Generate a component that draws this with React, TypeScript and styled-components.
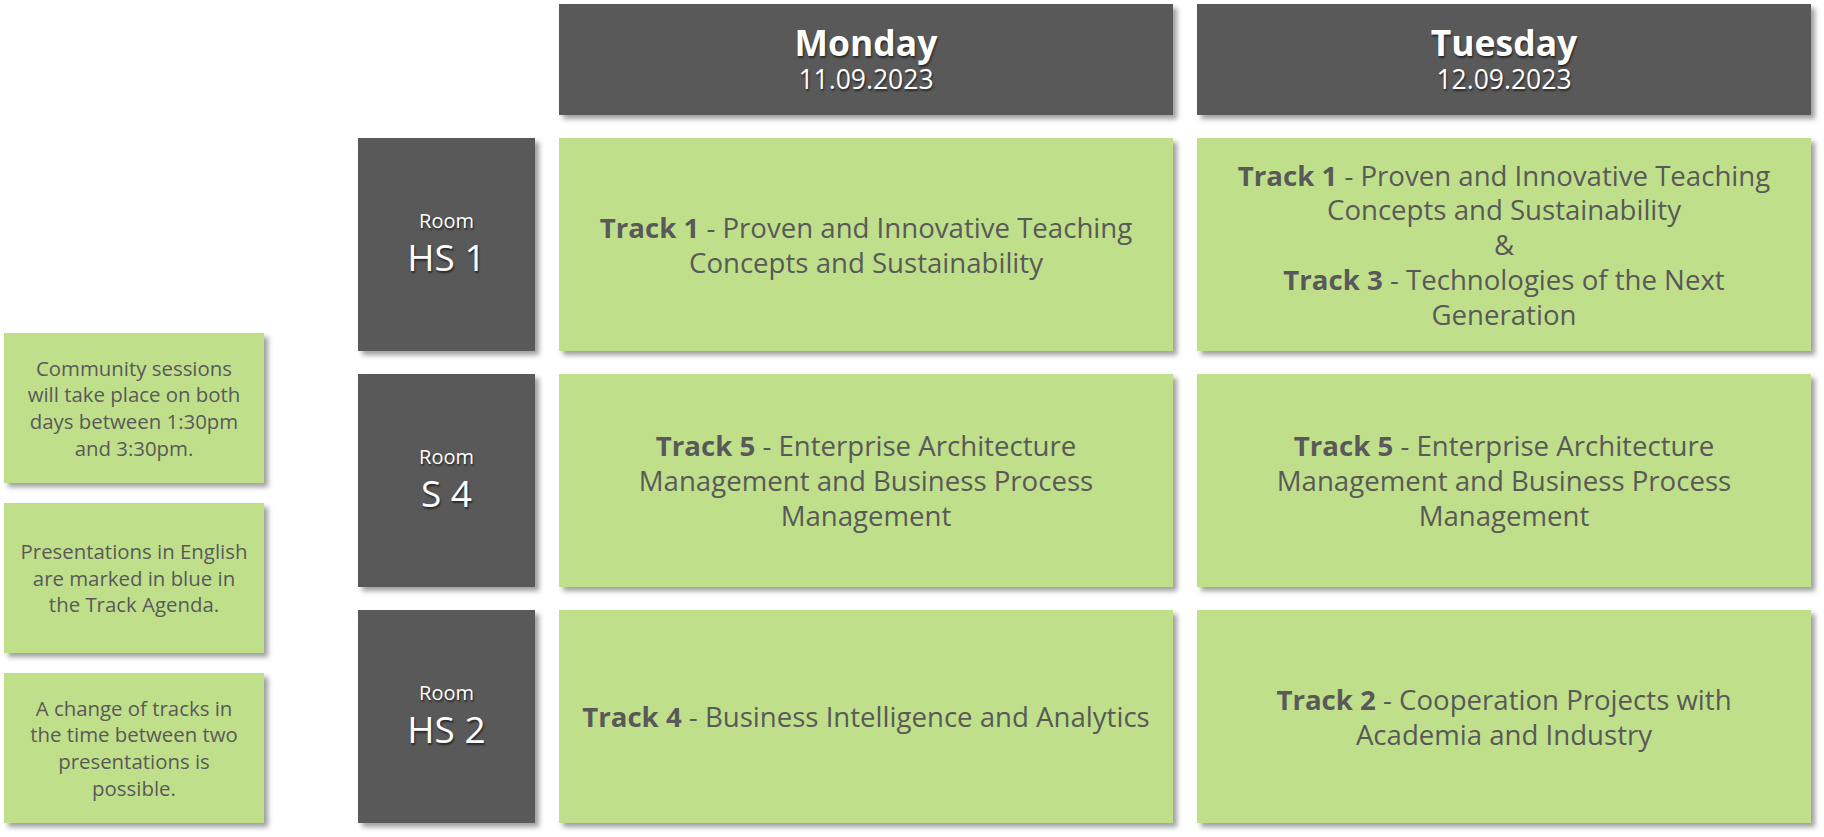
import React from 'react';
import styled, { createGlobalStyle } from 'styled-components';

const GlobalStyle = createGlobalStyle`
    html, body {
        margin: 0;
        padding: 0;
        background: #ffffff;
    }

    body {
        font-family: 'Open Sans', 'Noto Sans', sans-serif;
    }
`;

interface Track {
    num: number,
    title: string
}

interface Row {
    room: string,
    days: Track[][]
}

const days = [
    { name: 'Monday', date: '11.09.2023' },
    { name: 'Tuesday', date: '12.09.2023' },
];

const rows: Row[] = [
    {
        room: 'HS 1',
        days: [
            [{ num: 1, title: 'Proven and Innovative Teaching Concepts and Sustainability' }],
            [
                { num: 1, title: 'Proven and Innovative Teaching Concepts and Sustainability' },
                { num: 3, title: 'Technologies of the Next Generation' },
            ],
        ],
    },
    {
        room: 'S 4',
        days: [
            [{ num: 5, title: 'Enterprise Architecture Management and Business Process Management' }],
            [{ num: 5, title: 'Enterprise Architecture Management and Business Process Management' }],
        ],
    },
    {
        room: 'HS 2',
        days: [
            [{ num: 4, title: 'Business Intelligence and Analytics' }],
            [{ num: 2, title: 'Cooperation Projects with Academia and Industry' }],
        ],
    },
];

const notes = [
    'Community sessions will take place on both days between 1:30pm and 3:30pm.',
    'Presentations in English are marked in blue in the Track Agenda.',
    'A change of tracks in the time between two presentations is possible.',
];

const App: React.FC = () => {
    return (
        <>
            <GlobalStyle />
            <Page>
                <Notes>
                    {notes.map((text, i) => (
                        <Note key={i}>{text}</Note>
                    ))}
                </Notes>

                <Schedule>
                    <span />
                    {days.map(day => (
                        <DayHeader key={day.name}>
                            <strong>{day.name}</strong>
                            <span>{day.date}</span>
                        </DayHeader>
                    ))}

                    {rows.map(row => (
                        <React.Fragment key={row.room}>
                            <RoomCell>
                                <small>Room</small>
                                <span>{row.room}</span>
                            </RoomCell>
                            {row.days.map((tracks, d) => (
                                <TrackCell key={d}>
                                    {tracks.map((t, i) => (
                                        <React.Fragment key={i}>
                                            {i > 0 && <><br />&amp;<br /></>}
                                            <b>Track {t.num}</b> - {t.title}
                                        </React.Fragment>
                                    ))}
                                </TrackCell>
                            ))}
                        </React.Fragment>
                    ))}
                </Schedule>
            </Page>
        </>
    );
};

export default App;

const Page = styled.div`
    display: flex;
    align-items: flex-end;
    width: 1824px;
    height: 837px;
    box-sizing: border-box;
    padding: 4px 0 0 4px;
`;

const Notes = styled.div`
    display: flex;
    flex-direction: column;
    gap: 20px;
    width: 260px;
    margin-right: 94px;
    margin-bottom: 14px;
`;

const Box = styled.div`
    display: flex;
    flex-direction: column;
    align-items: center;
    justify-content: center;
    text-align: center;
    box-shadow: 4px 4px 5px rgba(0, 0, 0, 0.38);
`;

const Note = styled(Box)`
    display: block;
    align-content: center;
    height: 150px;
    padding: 0 16px;
    box-sizing: border-box;
    background: #c0df8a;
    color: #595959;
    font-size: 20.4px;
    line-height: 26.6px;
`;

const Schedule = styled.div`
    display: grid;
    grid-template-columns: 177px 614px 614px;
    grid-template-rows: 111px 213px 213px 213px;
    column-gap: 24px;
    row-gap: 23px;
    align-self: flex-start;
`;

const DayHeader = styled(Box)`
    background: #595959;
    color: #ffffff;
    text-shadow: 1px 2px 2px rgba(0, 0, 0, 0.55);
    padding-bottom: 2px;

    strong {
        font-size: 35.5px;
        line-height: 40px;
        font-weight: 700;
    }

    span {
        font-size: 26.5px;
        line-height: 34px;
    }
`;

const RoomCell = styled(Box)`
    background: #595959;
    color: #ffffff;
    text-shadow: 1px 2px 2px rgba(0, 0, 0, 0.55);
    padding-bottom: 4px;

    small {
        font-size: 20px;
        line-height: 28px;
    }

    span {
        font-size: 37px;
        line-height: 44px;
    }
`;

const TrackCell = styled(Box)`
    display: block;
    align-content: center;
    padding: 0 18px;
    background: #c0df8a;
    color: #595959;
    font-size: 27.6px;
    line-height: 34.7px;

    b {
        font-weight: 700;
    }
`;
